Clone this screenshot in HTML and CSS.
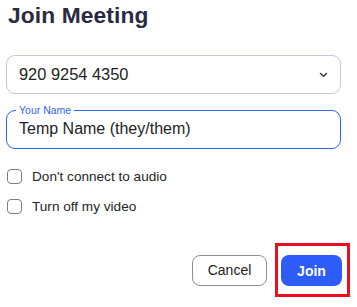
FILE: index.html
```html
<!DOCTYPE html>
<html>
<head>
<meta charset="utf-8">
<link rel="stylesheet" href="styles.css">
</head>
<body>
<div class="dialog">
  <h1 class="title">Join Meeting</h1>
  <div class="select">
    <span class="select-value">920 9254 4350</span>
    <svg class="chevron" width="9" height="6" viewBox="0 0 9 6"><polyline points="1.5,1.5 4.5,4.3 7.5,1.5" fill="none" stroke="#3a3a3a" stroke-width="1.5" stroke-linecap="round" stroke-linejoin="round"/></svg>
  </div>
  <div class="field">
    <span class="field-label">Your Name</span>
    <span class="field-value">Temp Name (they/them)</span>
  </div>
  <div class="options">
    <label class="option"><span class="box"></span><span>Don't connect to audio</span></label>
    <label class="option"><span class="box"></span><span>Turn off my video</span></label>
  </div>
  <div class="footer">
    <button class="btn btn-cancel">Cancel</button>
    <span class="highlight"><button class="btn btn-join">Join</button></span>
  </div>
</div>
</body>
</html>
```

FILE: styles.css
```css
html, body {
  margin: 0;
  padding: 0;
  background: #ffffff;
}
body {
  font-family: "Liberation Sans", Arial, sans-serif;
  color: #232323;
}
.dialog {
  padding: 0 16px 0 6px;
  display: flex;
  flex-direction: column;
}
.title {
  margin: 0;
  padding-left: 2px;
  font-size: 22.8px;
  line-height: 30px;
  font-weight: bold;
  color: #2b2a43;
  letter-spacing: 0.1px;
}
.select {
  margin-top: 25px;
  height: 37px;
  border: 1px solid #c8c5d6;
  border-radius: 9px;
  display: flex;
  align-items: center;
  justify-content: space-between;
  padding: 0 12px 0 12px;
}
.select-value {
  font-size: 16.4px;
  color: #232323;
}
.chevron {
  margin-top: 1px;
}
.field {
  position: relative;
  margin-top: 16px;
  height: 37px;
  border: 1px solid #2f66ef;
  border-radius: 9px;
  display: flex;
  align-items: center;
  padding: 0 12px;
}
.field-label {
  position: absolute;
  left: 9px;
  top: -7px;
  padding: 0 3px;
  background: #ffffff;
  color: #2f66ef;
  font-size: 10.5px;
  line-height: 12px;
}
.field-value {
  font-size: 16px;
  color: #232323;
  margin-top: -1px;
}
.options {
  margin-top: 20px;
  display: flex;
  flex-direction: column;
  gap: 15px;
}
.option {
  display: flex;
  align-items: center;
  height: 15px;
  font-size: 13.6px;
  color: #262626;
}
.box {
  width: 13px;
  height: 13px;
  margin-left: 1px;
  margin-right: 10px;
  border: 1px solid #7d7d7d;
  border-radius: 4px;
  background: #fff;
}
.footer {
  margin-top: 29px;
  margin-right: -9px;
  display: flex;
  justify-content: flex-end;
  align-items: center;
  gap: 8px;
}
.btn {
  font-family: "Liberation Sans", Arial, sans-serif;
  font-size: 14px;
  height: 31px;
  border-radius: 8px;
  padding: 0;
  margin: 0;
  cursor: pointer;
}
.btn-cancel {
  width: 75px;
  background: #ffffff;
  border: 1px solid #8f8f8f;
  color: #232323;
}
.highlight {
  display: flex;
  border: 3px solid #ec0d1f;
  padding: 9px 5px 8px 3px;
}
.btn-join {
  width: 61px;
  background: #2e5cfb;
  border: none;
  color: #ffffff;
  font-weight: bold;
}
```
